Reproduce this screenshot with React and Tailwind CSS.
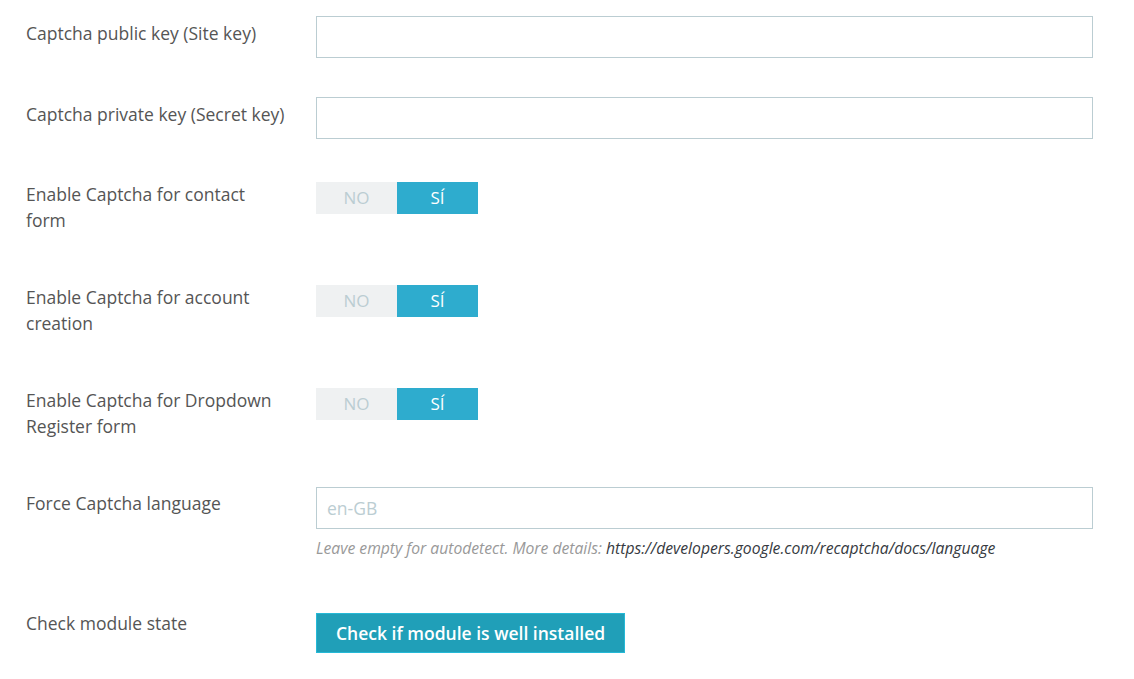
import React from "react";

const font = { fontFamily: '"Open Sans", "Noto Sans", sans-serif' };

function Toggle() {
  return (
    <div className="flex h-[32px] w-[162px] mt-[1px]">
      <span className="flex-1 flex items-center justify-center bg-[#eff1f2] text-[#bbcdd2] text-[17px] uppercase">NO</span>
      <span className="flex-1 flex items-center justify-center bg-[#2eacce] text-white text-[17px]">SÍ</span>
    </div>
  );
}

function Label({ children, pt = "pt-0" }) {
  return (
    <div className={`w-[316px] shrink-0 pl-[26px] pr-[30px] text-[17.5px] leading-[26px] text-[#555555] ${pt}`}>{children}</div>
  );
}

export default function App() {
  return (
    <div className="w-[1134px] h-[679px] bg-white pt-[16px]" style={font}>
      <div className="flex h-[81px]">
        <Label pt="pt-[4px]">Captcha public key (Site key)</Label>
        <input className="w-[777px] h-[42px] border border-[#bbcdd2] outline-none px-[10px]" />
      </div>
      <div className="flex h-[84px]">
        <Label pt="pt-[4px]">Captcha private key (Secret key)</Label>
        <input className="w-[777px] h-[42px] border border-[#bbcdd2] outline-none px-[10px]" />
      </div>
      <div className="flex h-[103px]">
        <Label>Enable Captcha for contact form</Label>
        <Toggle />
      </div>
      <div className="flex h-[103px]">
        <Label>Enable Captcha for account creation</Label>
        <Toggle />
      </div>
      <div className="flex h-[100px]">
        <Label>Enable Captcha for Dropdown Register form</Label>
        <Toggle />
      </div>
      <div className="flex h-[123px]">
        <Label pt="pt-[3px]">Force Captcha language</Label>
        <div className="flex flex-col">
          <input
            placeholder="en-GB"
            className="w-[777px] h-[42px] border border-[#bbcdd2] outline-none px-[10px] text-[17.5px] placeholder:text-[#bbcdd2]"
          />
          <p className="mt-[8px] text-[15.7px] italic text-[#999999] leading-[22px]">
            Leave empty for autodetect. More details: <span className="text-[#363a41]">https://developers.google.com/recaptcha/docs/language</span>
          </p>
        </div>
      </div>
      <div className="flex">
        <Label>Check module state</Label>
        <button className="mt-[3px] h-[40px] px-[19px] bg-[#209fb8] border border-[#25b9d7] text-white text-[17.5px] font-semibold">
          Check if module is well installed
        </button>
      </div>
    </div>
  );
}
